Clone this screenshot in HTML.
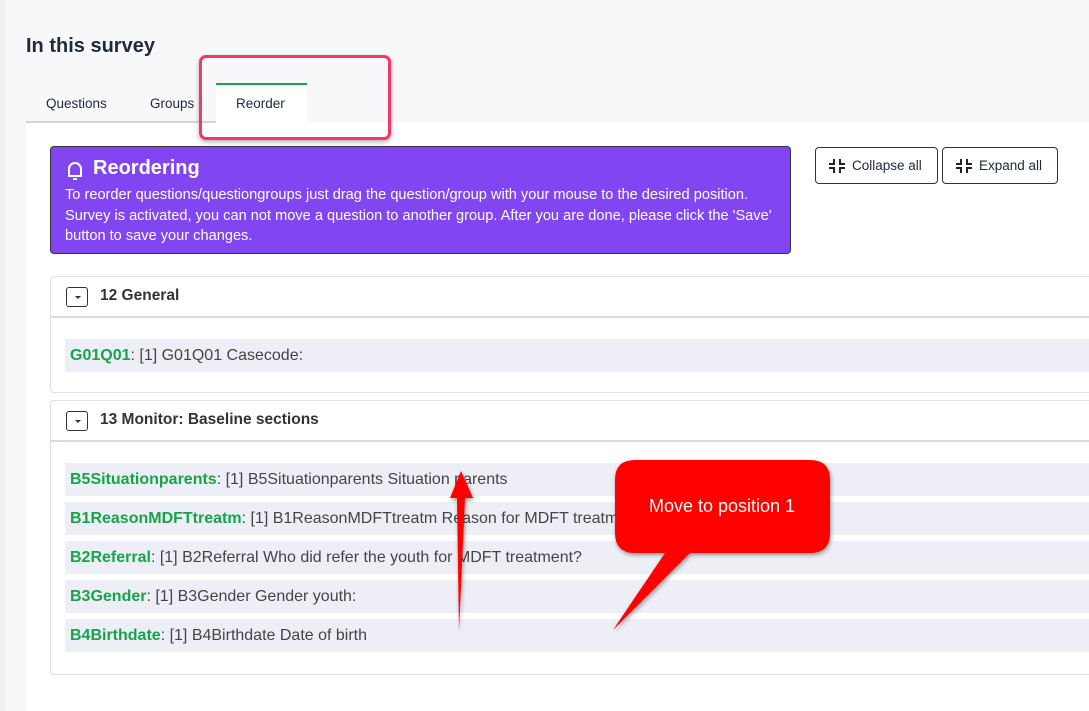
<!DOCTYPE html>
<html><head><style>
body{margin:0;width:1089px;height:711px;overflow:hidden;background:#f8f8fa;font-family:"Liberation Sans",sans-serif;color:#1e293b;position:relative}
.abs{position:absolute}
.white{left:26px;top:122px;width:1063px;height:589px;background:#fff}
.tabline{left:26px;top:121px;width:190px;height:2px;background:#d4d4d8}
.tab{font-size:13.5px;top:96px}
.btn{top:147px;height:37px;border:1px solid #333;border-radius:4px;background:#fff;font-size:13.5px;line-height:36px;box-sizing:border-box;padding-left:36px}
.grp{left:50px;width:1050px;border:1px solid #e0e0e4;border-radius:4px;background:#fff}
.gh{height:39px;border-bottom:2px solid #dcdce0;position:relative}
.gh span{position:absolute;left:49px;top:10px;font-size:15.5px;font-weight:bold;color:#333}
.tog{position:absolute;left:15px;top:10px;width:22px;height:20px;border:1px solid #333;border-radius:3px;box-sizing:border-box}
.tog:after{content:"";position:absolute;left:8px;top:8px;border:3px solid transparent;border-top:3px solid #333}
.row{position:absolute;left:14px;width:1040px;height:33px;background:#eeeff6;font-size:16px;line-height:33px;padding-left:5px;color:#444}
.row b{color:#16a34a}
</style></head><body>
<div class="abs" style="left:0;top:0;width:6px;height:711px;background:#f1f1f4"></div>
<div class="abs" style="left:26px;top:35px;font-size:20px;font-weight:bold;color:#1e293b">In this survey</div>
<div class="abs white"></div>
<div class="abs tabline"></div>
<div class="abs" style="left:216px;top:83px;width:91px;height:40px;background:#fff;border-top:2px solid #16a34a;box-sizing:border-box"></div>
<div class="abs tab" style="left:46px">Questions</div>
<div class="abs tab" style="left:150px">Groups</div>
<div class="abs tab" style="left:236px">Reorder</div>
<div class="abs" style="left:199px;top:55px;width:186px;height:79px;border:3px solid #f0386b;border-radius:7px;box-shadow:0 2px 5px rgba(0,0,0,.3)"></div>
<div class="abs" style="left:50px;top:146px;width:741px;height:108px;background:#8146f2;border:1px solid #333;border-radius:4px;box-sizing:border-box;color:#fff">
<svg class="abs" style="left:14px;top:13px" width="20" height="22" viewBox="0 0 20 22"><path d="M4 16V9a6 6 0 0 1 12 0v7H3M17 16" fill="none" stroke="#fff" stroke-width="2"/><path d="M8 19h4" stroke="#fff" stroke-width="2"/></svg>
<div class="abs" style="left:42px;top:10px;font-size:20px;font-weight:bold">Reordering</div>
<div class="abs" style="left:14px;top:38px;font-size:14.6px;line-height:20.5px;width:730px;white-space:nowrap">To reorder questions/questiongroups just drag the question/group with your mouse to the desired position.<br>Survey is activated, you can not move a question to another group. After you are done, please click the 'Save'<br>button to save your changes.</div>
</div>
<div class="abs btn" style="left:815px;width:123px">Collapse all</div>
<div class="abs btn" style="left:942px;width:116px">Expand all</div>
<svg class="abs" style="left:828px;top:158px" width="18" height="16"><path d="M6 1v5H1M12 1v5h5M6 15v-5H1M12 15v-5h5" fill="none" stroke="#222" stroke-width="2"/></svg>
<svg class="abs" style="left:955px;top:158px" width="18" height="16"><path d="M6 1v5H1M12 1v5h5M6 15v-5H1M12 15v-5h5" fill="none" stroke="#222" stroke-width="2"/></svg>
<div class="abs grp" style="top:276px;height:115px"><div class="gh"><div class="tog"></div><span>12 General</span></div>
<div class="row" style="top:62px"><b>G01Q01</b>: [1] G01Q01 Casecode:</div></div>
<div class="abs grp" style="top:400px;height:273px"><div class="gh"><div class="tog"></div><span>13 Monitor: Baseline sections</span></div>
<div class="row" style="top:62px"><b>B5Situationparents</b>: [1] B5Situationparents Situation parents</div>
<div class="row" style="top:101px"><b>B1ReasonMDFTtreatm</b>: [1] B1ReasonMDFTtreatm Reason for MDFT treatment</div>
<div class="row" style="top:140px"><b>B2Referral</b>: [1] B2Referral Who did refer the youth for MDFT treatment?</div>
<div class="row" style="top:179px"><b>B3Gender</b>: [1] B3Gender Gender youth:</div>
<div class="row" style="top:218px"><b>B4Birthdate</b>: [1] B4Birthdate Date of birth</div></div>
<svg class="abs" style="left:0;top:0" width="1089" height="711">
<defs><filter id="s"><feDropShadow dx="1" dy="2" stdDeviation="2" flood-opacity=".4"/></filter></defs>
<path d="M459 631 L457 498 L450 498 L461 471 L473 498 L465 498 Z" fill="#f00" filter="url(#s)"/>
<path d="M633 460 H810 Q830 460 830 480 V533 Q830 553 810 553 H690 L613 630 L665 553 H635 Q615 553 615 533 V480 Q615 460 635 460 Z" fill="#f00" filter="url(#s)"/>
<text x="722" y="512" fill="#fff" font-size="18" text-anchor="middle" font-family="Liberation Sans">Move to position 1</text>
</svg>
</body></html>
